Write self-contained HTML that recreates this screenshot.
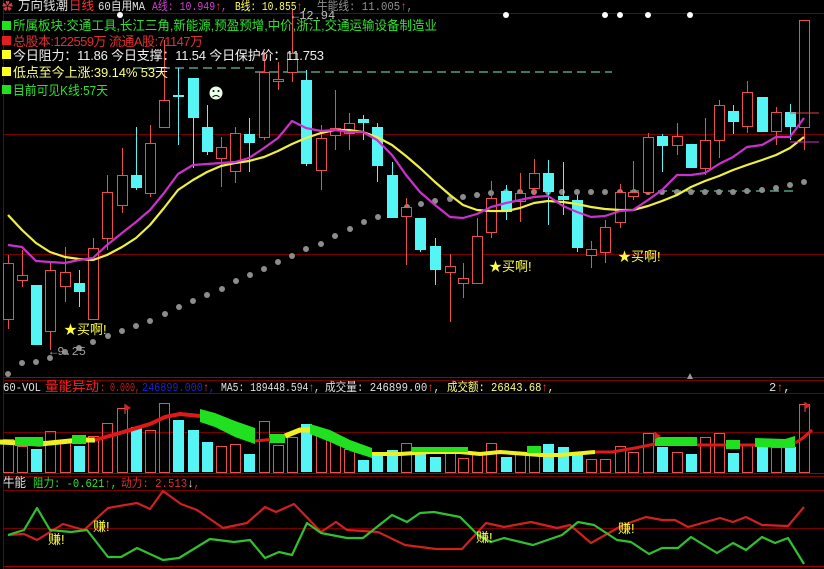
<!DOCTYPE html>
<html><head><meta charset="utf-8"><style>
html,body{margin:0;padding:0;background:#000;width:824px;height:569px;overflow:hidden}
svg{display:block}
text{font-family:"Liberation Mono","Noto Sans CJK SC",monospace;font-size:12px}
.cj{font-family:"Liberation Sans","Noto Sans CJK SC",sans-serif;font-size:13px}
</style></head><body>
<svg id="s" width="824" height="569" viewBox="0 0 824 569" xmlns="http://www.w3.org/2000/svg">
<rect width="824" height="569" fill="#000"/>
<g id="grid" stroke="#7a0000" stroke-width="1">
<line x1="3" y1="13.5" x2="824" y2="13.5"/>
<line x1="3" y1="134.5" x2="824" y2="134.5"/>
<line x1="3" y1="254.5" x2="824" y2="254.5"/>
<line x1="3" y1="377.5" x2="824" y2="377.5" stroke="#a00000"/>
<line x1="3" y1="380.5" x2="824" y2="380.5"/>
<line x1="3" y1="393.5" x2="824" y2="393.5"/>
<line x1="3" y1="432.5" x2="824" y2="432.5"/>
<line x1="3" y1="473.5" x2="824" y2="473.5" stroke="#a00000"/>
<line x1="3" y1="476.5" x2="824" y2="476.5"/>
<line x1="3" y1="490.5" x2="824" y2="490.5"/>
<line x1="3" y1="528.5" x2="824" y2="528.5"/>
<line x1="3" y1="566.5" x2="824" y2="566.5" stroke="#a00000"/>
<line x1="3.5" y1="0" x2="3.5" y2="569"/>
</g>
<g id="dash" stroke="#5fbfa0" stroke-width="1.2" stroke-dasharray="9,5" fill="none">
<line x1="133" y1="68" x2="255" y2="68"/>
<line x1="255" y1="72" x2="612" y2="72"/>
<line x1="630" y1="191" x2="795" y2="191"/>
</g>
<g id="dots" fill="#8c8c8c"></g>
<g id="candles"></g>
<g id="ma" fill="none" stroke-width="2.2"></g>
<g id="vol"></g>
<g id="bot" fill="none" stroke-width="2.2"></g>
<line x1="790" y1="113" x2="819" y2="113" stroke="#e04040"/>
<line x1="790" y1="142" x2="819" y2="142" stroke="#d030d0"/>
<g fill="#fff">
<circle cx="120" cy="15" r="3"/><circle cx="506" cy="15" r="3"/><circle cx="605" cy="15" r="3"/><circle cx="620" cy="15" r="3"/><circle cx="648" cy="15" r="3"/><circle cx="690" cy="15" r="3"/>
</g>
<circle cx="216" cy="93" r="6.5" fill="#e8ffe8"/>
<circle cx="213.5" cy="91" r="1" fill="#000"/><circle cx="218.5" cy="91" r="1" fill="#000"/>
<path d="M212.5 97 Q216 94 219.5 97" stroke="#000" fill="none" stroke-width="1"/>
<polygon points="690,373 687,379 693,379" fill="#999"/>
<!-- header text -->
<text x="2" y="10" fill="#d04040" style="font-size:11px">✿</text>
<text class="cj" x="18" y="10" fill="#e0e0e0" textLength="50" lengthAdjust="spacingAndGlyphs">万向钱潮</text>
<text class="cj" x="69" y="10" fill="#ff3030" textLength="25" lengthAdjust="spacingAndGlyphs">日线</text>
<text x="98" y="10" fill="#e0e0e0" textLength="47" lengthAdjust="spacingAndGlyphs">60自用MA</text>
<text x="152" y="10" fill="#d040d0" textLength="75" lengthAdjust="spacingAndGlyphs">A线: 10.949<tspan fill="#ff4040">↑</tspan>,</text>
<text x="235" y="10" fill="#ffff60" textLength="73" lengthAdjust="spacingAndGlyphs">B线: 10.855<tspan fill="#ff4040">↑</tspan>,</text>
<text x="317" y="10" fill="#909090" textLength="96" lengthAdjust="spacingAndGlyphs">牛能线: 11.005<tspan fill="#ff4040">↑</tspan>,</text>
<text x="292" y="19" fill="#c0c0c0">←12.94</text>
<rect x="2" y="21" width="9" height="9" fill="#20e020"/>
<text class="cj" x="13" y="30" fill="#30e030" textLength="424" lengthAdjust="spacingAndGlyphs">所属板块:交通工具,长江三角,新能源,预盈预增,中价,浙江,交通运输设备制造业</text>
<rect x="2" y="36" width="9" height="9" fill="#e02020"/>
<text class="cj" x="13" y="46" fill="#e03030" textLength="190" lengthAdjust="spacing">总股本:122559万   流通A股:71147万</text>
<rect x="2" y="50" width="9" height="9" fill="#ffff20"/>
<text class="cj" x="13" y="60" fill="#f0f0f0" textLength="311" lengthAdjust="spacing">今日阻力：11.86  今日支撑：11.54  今日保护价：11.753</text>
<rect x="2" y="67" width="9" height="9" fill="#ffff20"/>
<text class="cj" x="13" y="77" fill="#ffff80" textLength="155" lengthAdjust="spacing">低点至今上涨:39.14%   53天</text>
<rect x="2" y="85" width="9" height="9" fill="#20e020"/>
<text class="cj" x="13" y="95" fill="#30e030" textLength="95" lengthAdjust="spacingAndGlyphs">目前可见K线:57天</text>
<text class="cj" x="64" y="334" fill="#ffff40">★买啊!</text>
<text class="cj" x="489" y="271" fill="#ffff40">★买啊!</text>
<text class="cj" x="618" y="261" fill="#ffff40">★买啊!</text>
<text x="50" y="355" fill="#a0a0a0">←9.25</text>
<!-- vol header -->
<text x="3" y="391" fill="#e0e0e0" textLength="38" lengthAdjust="spacingAndGlyphs">60-VOL</text>
<text class="cj" x="45" y="391" fill="#ff2020" textLength="54" lengthAdjust="spacingAndGlyphs">量能异动</text>
<text x="100" y="391" fill="#c02020" textLength="40" lengthAdjust="spacingAndGlyphs">: 0.000,</text>
<text x="142" y="391" fill="#2020d0" textLength="73" lengthAdjust="spacingAndGlyphs">246899.000<tspan fill="#ff4040">↑</tspan>,</text>
<text x="221" y="391" fill="#e0e0e0" textLength="99" lengthAdjust="spacingAndGlyphs">MA5: 189448.594<tspan fill="#ff4040">↑</tspan>,</text>
<text x="325" y="391" fill="#e0e0e0" textLength="115" lengthAdjust="spacingAndGlyphs">成交量: 246899.00<tspan fill="#ff4040">↑</tspan>,</text>
<text x="447" y="391" fill="#ffff80" textLength="107" lengthAdjust="spacingAndGlyphs">成交额: 26843.68<tspan fill="#ff4040">↑</tspan>,</text>
<text x="769" y="391" fill="#e0e0e0">2<tspan fill="#ff4040">↑</tspan>,</text>
<text class="cj" x="3" y="487" fill="#e0e0e0" textLength="23" lengthAdjust="spacingAndGlyphs">牛能</text>
<text x="33" y="487" fill="#30e030" textLength="84" lengthAdjust="spacingAndGlyphs">阻力: -0.621<tspan fill="#ff4040">↑</tspan>,</text>
<text x="121" y="487" fill="#e03030" textLength="79" lengthAdjust="spacingAndGlyphs">动力: 2.513<tspan fill="#e0e0e0">↓</tspan>,</text>
<text class="cj" x="48" y="544" fill="#ffff40">赚!</text>
<text class="cj" x="93" y="531" fill="#ffff40">赚!</text>
<text class="cj" x="476" y="542" fill="#ffff40">赚!</text>
<text class="cj" x="618" y="533" fill="#ffff40">赚!</text>
</svg>
<script>
var NS="http://www.w3.org/2000/svg";
function el(p,t,a){var e=document.createElementNS(NS,t);for(var k in a)e.setAttribute(k,a[k]);p.appendChild(e);return e;}
var R="#e85050",C="#55f5f5";
var K=[[8,1,263,319,255,329],[22,1,275,280,250,287],[36,0,285,345,285,345],[50,1,270,331,262,350],[65,1,272,286,247,302],[79,0,283,292,270,307],[93,1,248,319,238,320],[107,1,192,238,175,250],[122,1,175,205,148,213],[136,0,175,188,127,190],[150,1,143,193,125,197],[164,1,100,127,40,128],[178,0,95,97,68,145],[193,0,78,118,78,168],[207,0,127,152,105,155],[221,1,147,158,137,187],[235,1,133,171,127,183],[249,0,134,143,118,172],[264,1,72,137,52,140],[278,1,79,81,62,90],[292,1,53,72,10,82],[306,0,80,164,70,166],[321,1,138,170,125,190],[335,1,128,135,90,150],[349,1,123,133,113,150],[363,0,119,123,115,140],[377,0,127,166,123,182],[392,0,175,218,162,218],[406,1,207,216,198,265],[420,0,218,250,218,252],[435,0,246,270,238,285],[450,1,266,272,254,322],[463,1,278,283,263,298],[477,1,236,283,218,284],[491,1,198,232,181,238],[506,0,191,212,185,220],[520,1,193,201,173,222],[534,1,173,188,159,195],[548,0,173,192,160,225],[563,0,196,200,162,215],[577,0,200,248,195,252],[591,1,249,255,241,268],[605,1,227,252,220,263],[620,1,192,222,184,228],[633,1,192,196,161,200],[648,1,137,192,133,193],[662,0,136,146,134,172],[677,1,136,145,123,155],[691,0,144,168,144,168],[705,1,140,168,118,175],[719,1,105,140,100,158],[733,0,111,122,105,134],[747,1,92,126,81,133],[762,0,97,132,97,132],[776,1,112,131,107,145],[790,0,112,127,104,140],[804,1,20,127,20,150]];
var g=document.getElementById("candles");
K.forEach(function(k){var c=k[1]?R:C;
 el(g,"line",{x1:k[0]+.5,y1:k[4],x2:k[0]+.5,y2:k[5],stroke:c,"stroke-width":1});
 var h=Math.max(k[3]-k[2],1.5);
 if(k[1])el(g,"rect",{x:k[0]-4.5,y:k[2]+.5,width:10,height:h,fill:"#000",stroke:c,"stroke-width":1});
 else el(g,"rect",{x:k[0]-5,y:k[2],width:11,height:h,fill:c});
});
var D=[[8,374],[22,363],[36,362],[50,358],[65,352],[79,348],[93,342],[108,336],[122,331],[136,326],[150,321],[165,314],[179,307],[193,301],[207,295],[222,289],[236,281],[250,275],[264,269],[278,262],[292,256],[306,249],[321,244],[335,236],[350,229],[364,222],[378,217],[392,211],[407,207],[421,204],[435,201],[450,199],[463,197],[477,195],[491,193],[506,192],[520,192],[534,192],[548,192],[562,192],[577,192],[591,192],[605,192],[620,192],[634,192],[648,192],[662,192],[677,192],[691,192],[705,192],[719,192],[733,192],[747,191],[762,190],[776,188],[790,185],[804,182]];
var dg=document.getElementById("dots");D.forEach(function(d){el(dg,"circle",{cx:d[0],cy:d[1],r:3});});
function pl(p,pts,c,w){el(p,"polyline",{points:pts.map(function(q){return q.join(",")}).join(" "),stroke:c,"stroke-width":w||2.2,fill:"none","stroke-linejoin":"round"});}
var X=K.map(function(k){return k[0]});
var P=[245,247,261,262,263,260,258,245,233,222,210,193,174,165,164,163,162,158,148,138,121,128,131,130,132,132,140,155,175,192,205,217,218,214,207,203,200,197,196,206,212,217,216,211,210,200,190,175,175,173,164,157,147,145,137,137,118];
var Y=[215,230,243,252,257,259,260,255,247,238,225,208,190,180,172,166,163,161,157,151,144,138,133,130,130,132,137,145,156,168,182,195,205,210,211,211,208,203,201,202,204,207,209,210,210,206,201,195,187,181,176,170,165,160,155,148,137];
var mg=document.getElementById("ma");
pl(mg,X.map(function(x,i){return[x,Y[i]]}),"#f0f040");
pl(mg,X.map(function(x,i){return[x,P[i]]}),"#cc30cc");
var V=[439,446,449,431,441,446,436,423,408,427,430,403,420,430,442,446,444,454,421,445,437,424,430,440,449,460,456,450,443,452,457,452,458,454,443,457,452,455,444,447,453,459,459,446,452,433,447,452,454,437,433,453,445,447,447,447,404];
var vg=document.getElementById("vol");
V.forEach(function(v,i){var x=X[i],red=K[i][1];
 if(red)el(vg,"rect",{x:x-4.5,y:v+.5,width:10,height:472-v,fill:"none",stroke:R,"stroke-width":1});
 else el(vg,"rect",{x:x-5,y:v,width:11,height:472-v,fill:C});});
function pg(pts,c){el(vg,"polygon",{points:pts.map(function(q){return q.join(",")}).join(" "),fill:c});}
pl(vg,[[0,442],[40,444],[60,442],[80,440],[95,440]],"#f0f020",5);
pg([[15,437],[43,437],[43,446],[15,446]],"#20e020");
pg([[72,435],[86,435],[86,444],[72,444]],"#20e020");
pl(vg,[[95,440],[120,433],[150,424],[165,417],[180,414],[200,416]],"#e01818",4);
pg([[200,409],[215,413],[235,421],[255,428],[255,444],[235,437],[215,427],[200,422]],"#20e020");
pl(vg,[[255,441],[285,438]],"#e01818",3);
pg([[270,434],[285,434],[285,443],[270,443]],"#20e020");
pl(vg,[[285,436],[300,430],[315,430]],"#f0f020",5);
pg([[310,424],[330,430],[350,440],[372,448],[372,458],[350,451],[330,442],[310,434]],"#20e020");
pl(vg,[[372,454],[400,454],[430,452],[460,452],[480,454],[500,452],[540,455],[560,455],[595,452]],"#f0f020",4);
pg([[412,447],[468,447],[468,452],[412,452]],"#20e020");
pg([[527,446],[541,446],[541,453],[527,453]],"#20e020");
pl(vg,[[595,452],[612,452],[635,448],[655,444]],"#e01818",3);
pg([[655,437],[697,437],[697,446],[655,446]],"#20e020");
pl(vg,[[697,445],[755,445]],"#e01818",3);
pg([[726,440],[740,440],[740,449],[726,449]],"#20e020");
pg([[755,438],[785,439],[795,436],[795,448],[785,448],[755,447]],"#20e020");
pl(vg,[[795,443],[803,438],[812,430]],"#e01818",3);
[[125,404],[655,432],[805,402]].forEach(function(f){
 el(vg,"line",{x1:f[0],y1:f[1],x2:f[0],y2:f[1]+10,stroke:R});
 el(vg,"polygon",{points:f[0]+","+f[1]+" "+(f[0]+6)+","+(f[1]+4)+" "+f[0]+","+(f[1]+7),fill:"#e02020"});});
var bg=document.getElementById("bot");
pl(bg,[[8,535],[24,534],[37,540],[63,524],[84,530],[108,508],[137,503],[150,509],[163,491],[181,504],[197,510],[223,528],[247,523],[265,507],[276,512],[294,504],[321,532],[336,522],[347,530],[378,532],[405,545],[436,549],[462,549],[486,523],[504,527],[531,522],[557,528],[570,525],[591,543],[623,525],[646,517],[662,520],[675,520],[688,527],[720,518],[733,522],[746,517],[762,525],[788,526],[804,507]],"#d02020");
pl(bg,[[8,535],[24,530],[37,508],[50,530],[71,532],[87,530],[108,557],[121,557],[137,548],[163,560],[179,558],[210,539],[234,542],[250,540],[265,558],[279,552],[292,555],[307,523],[321,533],[347,538],[363,538],[392,515],[407,522],[420,513],[434,512],[460,517],[478,535],[491,542],[504,538],[533,545],[562,535],[578,522],[594,525],[617,540],[631,542],[649,554],[662,548],[678,548],[691,537],[717,553],[733,543],[746,550],[762,537],[775,543],[788,538],[804,564]],"#30c030");
</script>
</body></html>
